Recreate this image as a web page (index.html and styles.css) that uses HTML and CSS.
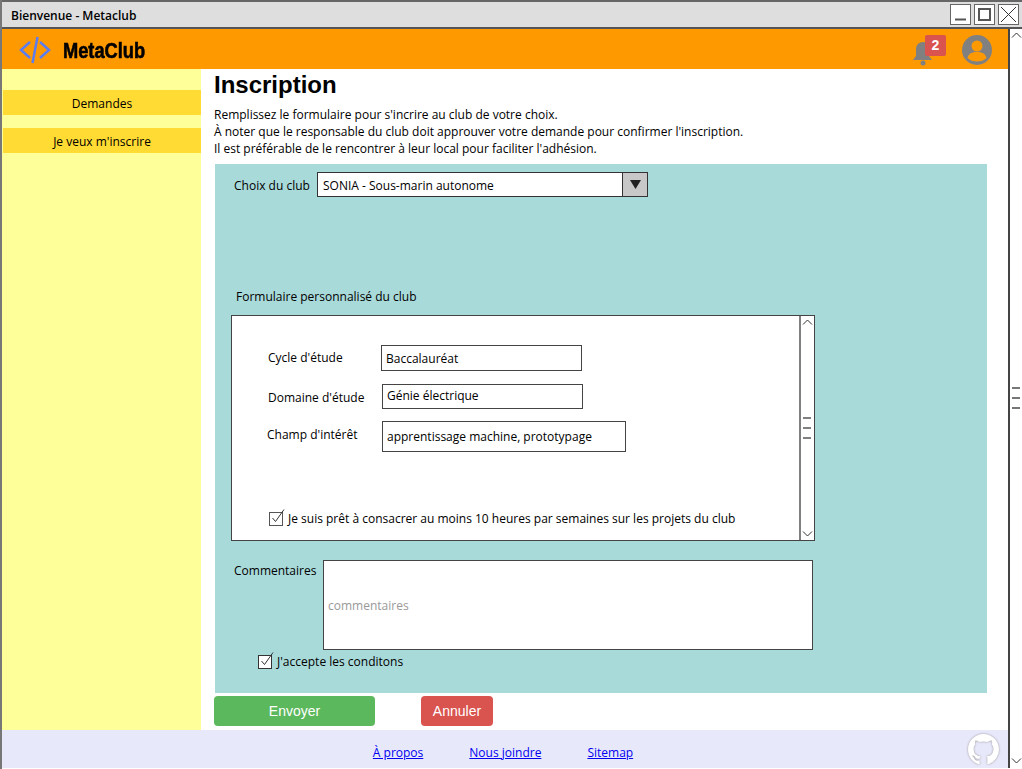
FILE: index.html

```html
<!DOCTYPE html>
<html lang="fr">
<head>
  <meta charset="UTF-8">
  <title>Bienvenue - Metaclub</title>
  <link rel="stylesheet" href="styles.css">
</head>
<body>
  <div class="window">
    <div class="titlebar">
      <span class="title">Bienvenue - Metaclub</span>
      <div class="winbtns">
        <div class="winbtn"><svg width="21" height="21" viewBox="0 0 21 21"><path d="M5 15.500h11" stroke="#555" stroke-width="2"/></svg></div>
        <div class="winbtn"><svg width="21" height="21" viewBox="0 0 21 21"><rect x="5" y="5" width="11" height="11" fill="none" stroke="#555" stroke-width="2"/></svg></div>
        <div class="winbtn"><svg width="21" height="21" viewBox="0 0 21 21"><path d="M3 3l15 15M18 3L3 18" stroke="#333" stroke-width="1"/></svg></div>
      </div>
    </div>

    <div class="app">
      <div class="page">
        <header class="topbar">
          <svg class="logo" width="32" height="28" viewBox="0 0 32 28">
            <path d="M11 6L2 14l9 8M21 6l9 8-9 8M18.500 1l-5 26" fill="none" stroke="#5b7df0" stroke-width="2.500"/>
          </svg>
          <span class="brand">MetaClub</span>
          <div class="bell">
            <svg width="24" height="28" viewBox="0 0 24 28">
              <path d="M12 3c4 0 6 3 6 7v7l3 4H2l3-4v-7c0-4 3-7 7-7z" fill="#808080"/>
              <circle cx="12" cy="24" r="2.500" fill="#808080"/>
            </svg>
            <span class="badge">2</span>
          </div>
          <svg class="avatar" width="30" height="30" viewBox="0 0 30 30">
            <circle cx="15" cy="15" r="15" fill="#808080"/>
            <circle cx="15" cy="11" r="5.500" fill="#ff9900"/>
            <path d="M5.500 23c1-4.500 5-6 9.500-6s8.500 1.500 9.500 6c-2.500 2.500-5.800 3.500-9.500 3.500s-7-1-9.500-3.500z" fill="#ff9900"/>
          </svg>
        </header>

        <div class="middle">
          <aside class="sidebar">
            <a class="side-item">Demandes</a>
            <a class="side-item">Je veux m'inscrire</a>
          </aside>

          <main class="content">
            <h1>Inscription</h1>
            <p class="intro">Remplissez le formulaire pour s'incrire au club de votre choix.<br>
              À noter que le responsable du club doit approuver votre demande pour confirmer l'inscription.<br>
              Il est préférable de le rencontrer à leur local pour faciliter l'adhésion.</p>

            <form class="panel">
              <div class="club-row">
                <label class="club-label">Choix du club</label>
                <div class="select">
                  <span class="select-value">SONIA - Sous-marin autonome</span>
                  <span class="select-btn"><svg width="11" height="9" viewBox="0 0 11 9"><path d="M0 0h11L5.500 9z" fill="#222"/></svg></span>
                </div>
              </div>

              <div class="custom-label">Formulaire personnalisé du club</div>

              <div class="custom-box">
                <div class="custom-body">
                  <div class="field field-1">
                    <label>Cycle d'étude</label>
                    <div class="input">Baccalauréat</div>
                  </div>
                  <div class="field field-2">
                    <label>Domaine d'étude</label>
                    <div class="input">Génie électrique</div>
                  </div>
                  <div class="field field-3">
                    <label>Champ d'intérêt</label>
                    <div class="input">apprentissage machine, prototypage</div>
                  </div>
                  <div class="check check-hours">
                    <svg class="checkbox" width="16" height="18" viewBox="0 0 16 18"><rect x="0.500" y="3.500" width="13" height="13" fill="#fff" stroke="#555"/><path d="M3.500 9l3 3.500L15 0.500" fill="none" stroke="#333"/></svg>
                    <span>Je suis prêt à consacrer au moins 10 heures par semaines sur les projets du club</span>
                  </div>
                </div>
                <div class="inner-scroll">
                  <svg width="11" height="6" viewBox="0 0 11 6"><path d="M1 5.500L5.500 1 10 5.500" fill="none" stroke="#333"/></svg>
                  <div class="grip"><i></i><i></i><i></i></div>
                  <svg width="11" height="6" viewBox="0 0 11 6"><path d="M1 0.500L5.500 5 10 0.500" fill="none" stroke="#333"/></svg>
                </div>
              </div>

              <div class="comment-row">
                <label>Commentaires</label>
                <div class="textarea">commentaires</div>
              </div>

              <div class="check check-terms">
                <svg class="checkbox" width="16" height="18" viewBox="0 0 16 18"><rect x="0.500" y="3.500" width="13" height="13" fill="#fff" stroke="#333"/><path d="M3.500 9l3 3.500L15 0.500" fill="none" stroke="#333"/></svg>
                <span>J'accepte les conditons</span>
              </div>
            </form>

            <div class="actions">
              <button type="button" class="btn btn-send">Envoyer</button>
              <button type="button" class="btn btn-cancel">Annuler</button>
            </div>
          </main>
        </div>

        <footer class="footer">
          <a href="#">À propos</a>
          <a href="#">Nous joindre</a>
          <a href="#">Sitemap</a>
          <svg class="github" width="31" height="31" viewBox="0 0 16 16">
            <path d="M8 0C3.580 0 0 3.580 0 8c0 3.540 2.290 6.530 5.470 7.590.4.070.55-.17.55-.38 0-.19-.01-.82-.01-1.490-2.010.37-2.530-.49-2.690-.94-.09-.23-.48-.94-.82-1.130-.28-.15-.68-.52-.01-.53.63-.01 1.080.58 1.230.82.72 1.210 1.870.87 2.330.66.070-.52.28-.87.51-1.070-1.780-.2-3.640-.89-3.640-3.950 0-.87.31-1.590.82-2.150-.08-.2-.36-1.020.08-2.120 0 0 .67-.21 2.200.82.64-.18 1.320-.27 2-.27.68 0 1.360.09 2 .27 1.530-1.040 2.200-.82 2.200-.82.44 1.100.16 1.920.08 2.120.51.56.82 1.270.82 2.150 0 3.070-1.870 3.750-3.650 3.950.29.25.54.73.54 1.480 0 1.070-.01 1.930-.01 2.200 0 .21.15.46.55.38A8.013 8.013 0 0016 8c0-4.420-3.580-8-8-8z" fill="#fff"/>
          </svg>
        </footer>
      </div>

      <div class="scrollbar">
        <svg width="11" height="6" viewBox="0 0 11 6"><path d="M1 5.500L5.500 1 10 5.500" fill="none" stroke="#333"/></svg>
        <div class="grip"><i></i><i></i><i></i></div>
        <svg width="11" height="6" viewBox="0 0 11 6"><path d="M1 0.500L5.500 5 10 0.500" fill="none" stroke="#333"/></svg>
      </div>
    </div>
  </div>
</body>
</html>
```

FILE: styles.css

```css
* {
  box-sizing: border-box;
}
html, body {
  margin: 0;
  padding: 0;
  height: 769px;
  overflow: hidden;
  background: #fff;
}
body {
  font-family: "Open Sans", sans-serif;
  font-size: 12px;
  color: #000;
}
.window {
  height: 769px;
  display: flex;
  flex-direction: column;
  padding-bottom: 1px;
  border-left: 2px solid #777;
}

/* title bar */
.titlebar {
  height: 29px;
  flex: none;
  display: flex;
  align-items: center;
  justify-content: space-between;
  background: #dedede;
  border-top: 2px solid #666;
  border-bottom: 2px solid #555;
  padding: 0 3px 0 9px;
}
.title {
  font-weight: 600;
  font-size: 12px;
  padding-top: 2px;
}
.winbtns {
  display: flex;
  gap: 3px;
}
.winbtn {
  width: 21px;
  height: 21px;
  background: #fff;
  border: 1px solid #666;
  display: flex;
  align-items: center;
  justify-content: center;
}
.winbtn svg {
  flex: none;
}

.app {
  flex: 1;
  display: flex;
  min-height: 0;
}
.page {
  flex: 1;
  display: flex;
  flex-direction: column;
  min-width: 0;
}

/* header */
.topbar {
  height: 40px;
  flex: none;
  background: #ff9900;
  display: flex;
  align-items: center;
  padding: 1px 16px 0 17px;
}
.brand {
  font-family: "Liberation Sans", sans-serif;
  font-weight: 700;
  font-size: 22px;
  line-height: 26px;
  -webkit-text-stroke: 0.6px #000;
  margin: 3px 0 0 12px;
  transform: scaleX(0.83);
  transform-origin: left center;
}
.bell {
  position: relative;
  margin-left: auto;
  margin-right: 27px;
  width: 24px;
  height: 28px;
  margin-top: 6px;
}
.badge {
  position: absolute;
  left: 14px;
  top: -4px;
  width: 21px;
  height: 21px;
  background: #d9534f;
  border-radius: 2px;
  color: #fff;
  font-family: "Liberation Sans", sans-serif;
  font-weight: 700;
  font-size: 14px;
  text-align: center;
  line-height: 20px;
}

.middle {
  flex: 1;
  display: flex;
  min-height: 0;
}

/* sidebar */
.sidebar {
  width: 199px;
  flex: none;
  background: #ffff99;
  padding-top: 21px;
  display: flex;
  flex-direction: column;
  gap: 13px;
}
.side-item {
  height: 25px;
  line-height: 27px;
  margin-left: 1px;
  background: #ffdb33;
  text-align: center;
}

/* main */
.content {
  flex: 1;
  padding: 0 21px 0 13px;
  min-width: 0;
}
h1 {
  margin: 0;
  font-family: "Liberation Sans", sans-serif;
  font-weight: 700;
  font-size: 24px;
  line-height: 32px;
}
.intro {
  margin: 5px 0 7px;
  line-height: 17px;
}
.panel {
  margin-left: 1px;
  height: 529px;
  background: #a9dada;
  padding-top: 8px;
}
.club-row {
  display: flex;
  align-items: center;
  height: 25px;
  padding-left: 19px;
}
.club-label {
  width: 83px;
  padding-top: 1px;
}
.select {
  width: 331px;
  height: 25px;
  background: #fff;
  border: 1px solid #333;
  display: flex;
  align-items: center;
}
.select-value {
  flex: 1;
  padding: 2px 0 0 5px;
}
.select-btn {
  width: 25px;
  height: 23px;
  background: #c8c8c8;
  border-left: 1px solid #333;
  display: flex;
  align-items: center;
  justify-content: center;
}
.custom-label {
  margin: 92px 0 0 21px;
  line-height: 16px;
}
.custom-box {
  margin: 10px 0 0 16px;
  width: 584px;
  height: 226px;
  background: #fff;
  border: 1px solid #444;
  display: flex;
}
.custom-body {
  flex: 1;
  padding: 29px 0 0 36px;
}
.field {
  display: flex;
  align-items: center;
}
.field label {
  width: 113px;
}
.field-1 label {
  padding-bottom: 2px;
}
.input {
  height: 26px;
  width: 201px;
  background: #fff;
  border: 1px solid #444;
  padding: 0 4px;
  display: flex;
  align-items: center;
}
.field-2 {
  margin-top: 13px;
}
.field-2 label {
  padding-top: 2px;
}
.field-2 .input {
  width: 201px;
  margin-left: 1px;
  height: 25px;
  padding-bottom: 3px;
}
.field-3 {
  margin-top: 12px;
  margin-left: -1px;
  align-items: flex-start;
}
.field-3 label {
  padding-top: 5px;
  width: 115px;
}
.field-3 .input {
  width: 244px;
  height: 31px;
}
.check {
  display: flex;
  align-items: flex-end;
  gap: 3px;
}
.checkbox {
  flex: none;
}
.check-hours {
  margin-top: 57px;
  margin-left: 1px;
}
.inner-scroll {
  width: 15px;
  flex: none;
  border-left: 2px solid #808080;
  display: flex;
  flex-direction: column;
  align-items: center;
  justify-content: space-between;
  padding: 3px 0;
}
.inner-scroll .grip {
  padding-right: 2px;
}
.inner-scroll .grip i {
  background: #808080;
}
.grip {
  display: flex;
  flex-direction: column;
  gap: 8px;
}
.grip i {
  display: block;
  width: 8px;
  height: 2px;
  background: #777;
}
.comment-row {
  display: flex;
  margin: 19px 0 0 19px;
}
.comment-row label {
  width: 89px;
  padding-top: 2px;
}
.textarea {
  width: 490px;
  height: 90px;
  background: #fff;
  border: 1px solid #444;
  color: #999;
  display: flex;
  align-items: center;
  padding-left: 4px;
}
.check-terms {
  margin: 2px 0 0 43px;
  gap: 3px;
}

/* buttons */
.actions {
  display: flex;
  gap: 46px;
  margin-top: 3px;
}
.btn {
  height: 30px;
  border: 1px solid transparent;
  border-radius: 4px;
  color: #fff;
  font-family: "Liberation Sans", sans-serif;
  font-size: 14px;
  padding: 0;
}
.btn-send {
  width: 161px;
  background: #5cb85c;
}
.btn-cancel {
  width: 72px;
  background: #d9534f;
}

/* footer */
.footer {
  height: 38px;
  flex: none;
  position: relative;
  background: #e8e8fb;
  display: flex;
  justify-content: center;
  align-items: center;
  gap: 46px;
  padding: 6px 4px 0 0;
}
.footer a {
  color: #0000ee;
  text-decoration: underline;
}
.github {
  position: absolute;
  right: 9px;
  top: 4px;
  filter: drop-shadow(0 0 1px #999);
}

/* window scrollbar */
.scrollbar {
  width: 14px;
  flex: none;
  border-left: 2px solid #444;
  display: flex;
  flex-direction: column;
  align-items: center;
  justify-content: space-between;
  padding: 3px 0 4px;
}
.scrollbar .grip {
  padding-right: 1px;
}
```
